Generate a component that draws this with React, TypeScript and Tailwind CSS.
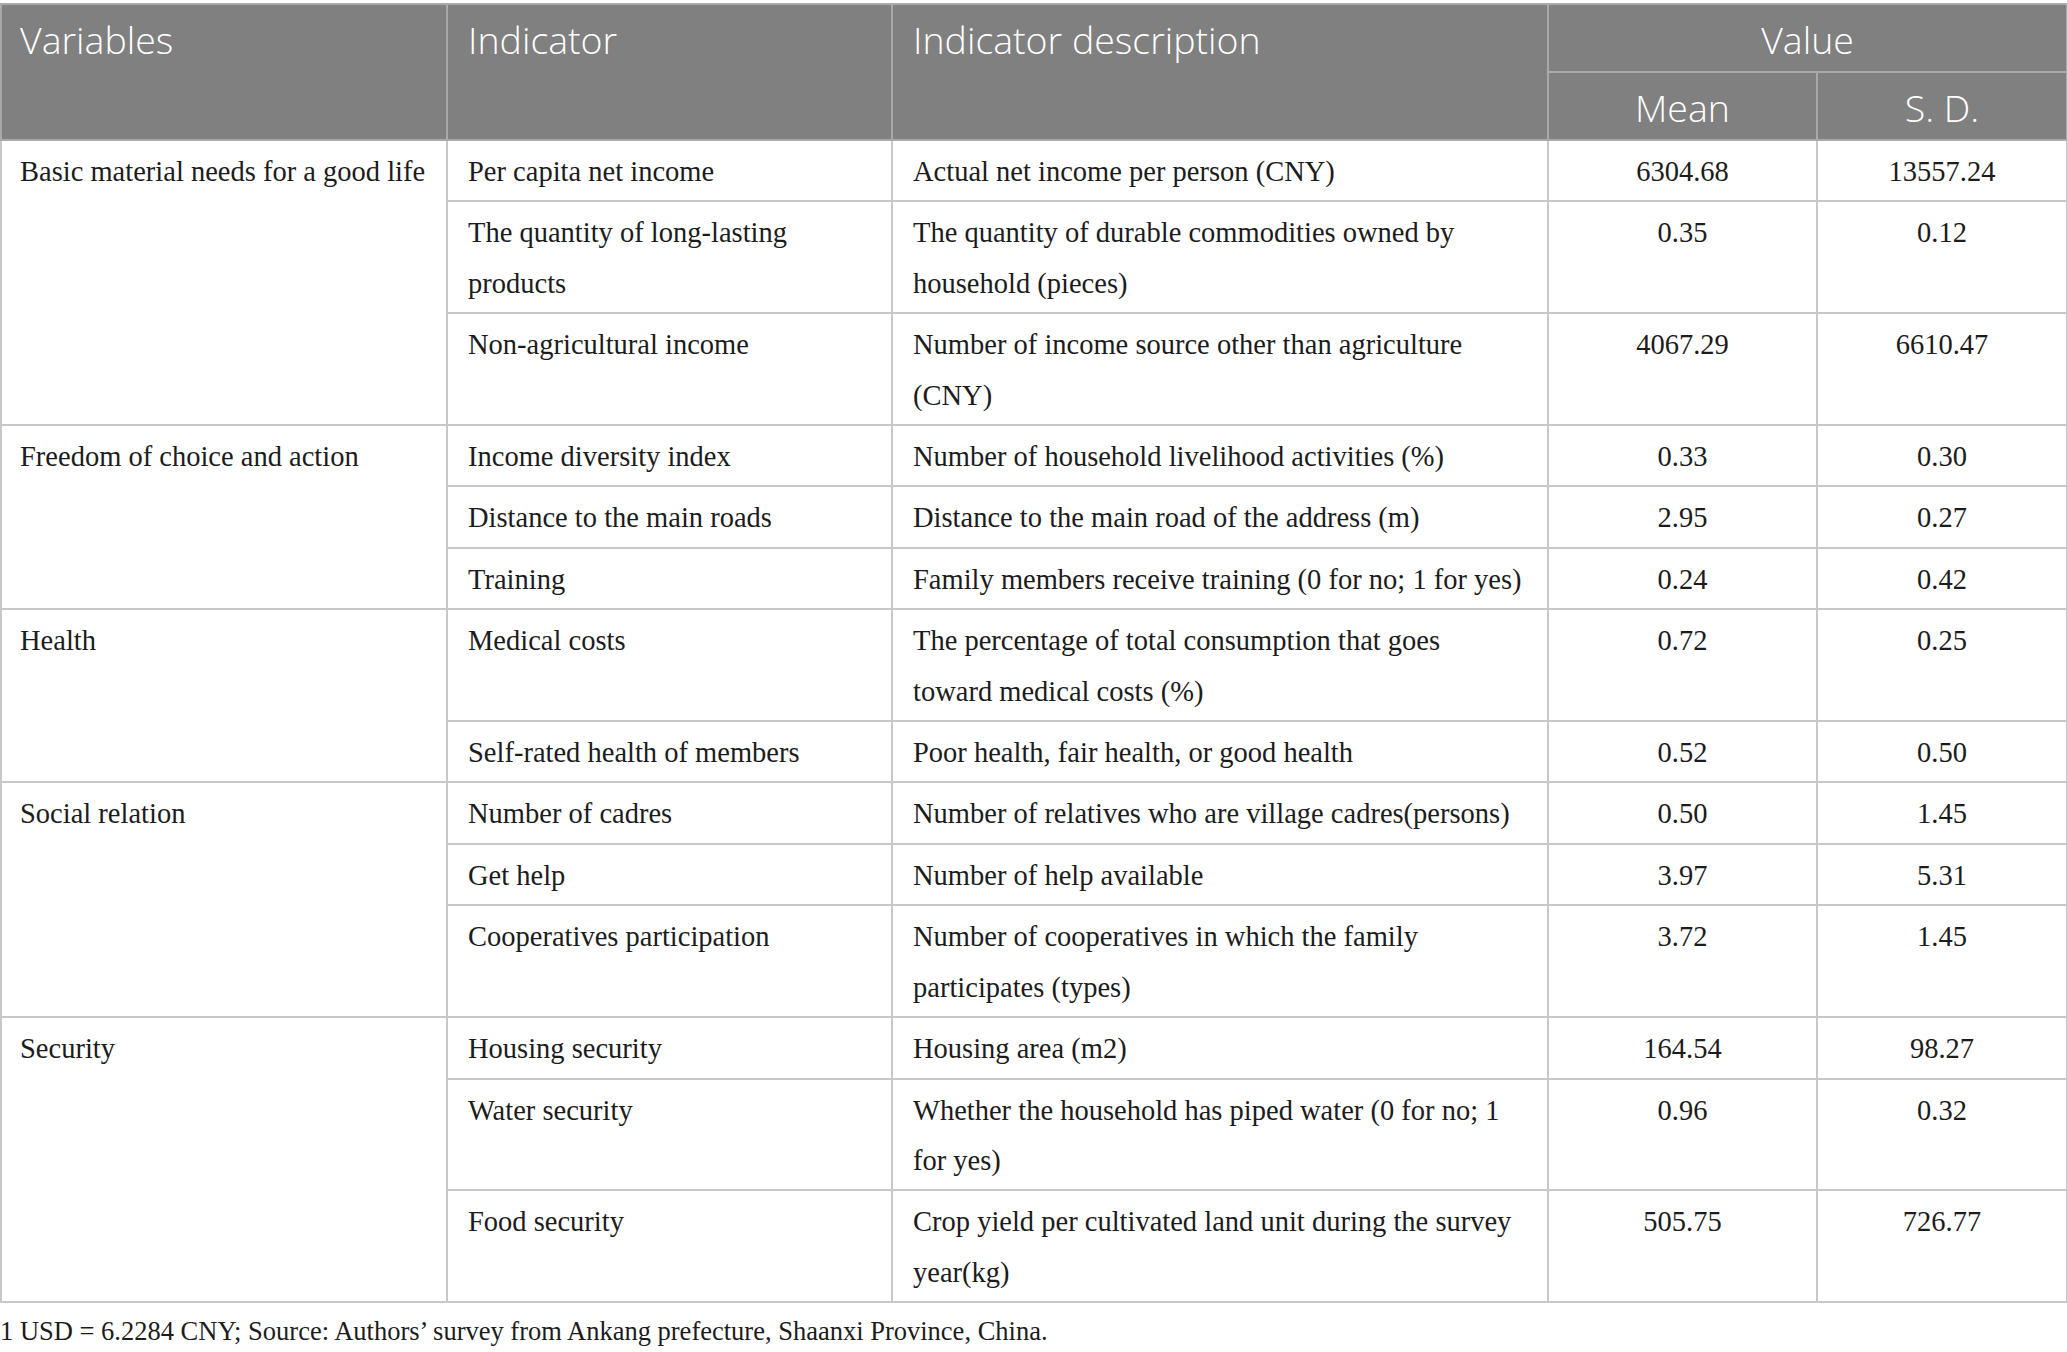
import React from "react";

type Row = { ind: React.ReactNode; desc: React.ReactNode; mean: string; sd: string };
type Group = { name: string; rows: Row[] };

const groups: Group[] = [
  {
    name: "Basic material needs for a good life",
    rows: [
      { ind: "Per capita net income", desc: "Actual net income per person (CNY)", mean: "6304.68", sd: "13557.24" },
      {
        ind: (<>The quantity of long-lasting<br />products</>),
        desc: (<>The quantity of durable commodities owned by<br />household (pieces)</>),
        mean: "0.35",
        sd: "0.12",
      },
      {
        ind: "Non-agricultural income",
        desc: (<>Number of income source other than agriculture<br />(CNY)</>),
        mean: "4067.29",
        sd: "6610.47",
      },
    ],
  },
  {
    name: "Freedom of choice and action",
    rows: [
      { ind: "Income diversity index", desc: "Number of household livelihood activities (%)", mean: "0.33", sd: "0.30" },
      { ind: "Distance to the main roads", desc: "Distance to the main road of the address (m)", mean: "2.95", sd: "0.27" },
      { ind: "Training", desc: "Family members receive training (0 for no; 1 for yes)", mean: "0.24", sd: "0.42" },
    ],
  },
  {
    name: "Health",
    rows: [
      {
        ind: "Medical costs",
        desc: (<>The percentage of total consumption that goes<br />toward medical costs (%)</>),
        mean: "0.72",
        sd: "0.25",
      },
      { ind: "Self-rated health of members", desc: "Poor health, fair health, or good health", mean: "0.52", sd: "0.50" },
    ],
  },
  {
    name: "Social relation",
    rows: [
      { ind: "Number of cadres", desc: "Number of relatives who are village cadres(persons)", mean: "0.50", sd: "1.45" },
      { ind: "Get help", desc: "Number of help available", mean: "3.97", sd: "5.31" },
      {
        ind: "Cooperatives participation",
        desc: (<>Number of cooperatives in which the family<br />participates (types)</>),
        mean: "3.72",
        sd: "1.45",
      },
    ],
  },
  {
    name: "Security",
    rows: [
      { ind: "Housing security", desc: "Housing area (m2)", mean: "164.54", sd: "98.27" },
      {
        ind: "Water security",
        desc: (<>Whether the household has piped water (0 for no; 1<br />for yes)</>),
        mean: "0.96",
        sd: "0.32",
      },
      {
        ind: "Food security",
        desc: (<>Crop yield per cultivated land unit during the survey<br />year(kg)</>),
        mean: "505.75",
        sd: "726.77",
      },
    ],
  },
];

const serif = "font-['Liberation_Serif','Times_New_Roman',serif]";
const td =
  "border-2 border-[#c8c8c8] align-top pt-[6px] pb-[3px] px-[20px] leading-[50.4px] whitespace-nowrap";
const th =
  "border-2 border-[#a9a9a9] font-light text-white px-[20px] pt-[3px] h-[66px] leading-[63px] whitespace-nowrap";

export default function App() {
  return (
    <div className="bg-white w-[2067px] min-h-[1352px] pt-[3px]">
      <table className={`w-[2066px] table-fixed border-collapse text-[28.5px] text-[#1c1c1c] ${serif}`}>
        <colgroup>
          <col className="w-[446px]" />
          <col className="w-[445px]" />
          <col className="w-[656px]" />
          <col className="w-[269px]" />
          <col className="w-[250px]" />
        </colgroup>
        <thead className="bg-[#808080] font-['Open_Sans','Noto_Sans',sans-serif] text-[37.5px]">
          <tr>
            <th rowSpan={2} className={`${th} pl-[18px] text-left align-top`}>Variables</th>
            <th rowSpan={2} className={`${th} text-left align-top`}>Indicator</th>
            <th rowSpan={2} className={`${th} text-left align-top`}>Indicator description</th>
            <th colSpan={2} className={`${th} text-center align-top`}>Value</th>
          </tr>
          <tr>
            <th className={`${th} text-center align-top`}>Mean</th>
            <th className={`${th} text-center align-top`}>S. D.</th>
          </tr>
        </thead>
        <tbody>
          {groups.map((g) =>
            g.rows.map((r, i) => (
              <tr key={g.name + i}>
                {i === 0 && (
                  <td rowSpan={g.rows.length} className={`${td} pl-[18px]`}>
                    {g.name}
                  </td>
                )}
                <td className={td}>{r.ind}</td>
                <td className={td}>{r.desc}</td>
                <td className={`${td} text-center`}>{r.mean}</td>
                <td className={`${td} text-center`}>{r.sd}</td>
              </tr>
            ))
          )}
        </tbody>
      </table>
      <p className={`mt-[3px] leading-[50px] text-[26.5px] text-[#1c1c1c] ${serif}`}>
        1 USD = 6.2284 CNY; Source: Authors’ survey from Ankang prefecture, Shaanxi Province, China.
      </p>
    </div>
  );
}
